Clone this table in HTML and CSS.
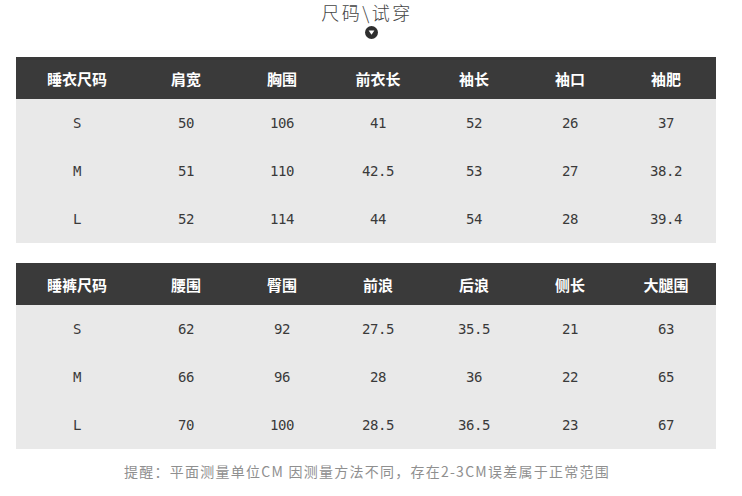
FILE: index.html
```html
<!DOCTYPE html>
<html lang="zh">
<head>
<meta charset="utf-8">
<link rel="stylesheet" href="styles.css">
</head>
<body>
<div class="page">
  <div class="title">尺码\试穿</div>
  <div class="arrow">
    <svg width="13" height="13" viewBox="0 0 13 13"><circle cx="6.5" cy="6.5" r="6.5" fill="#2e2e2e"/><path d="M3.6 4.6 H9.4 L6.5 8.8 Z" fill="#fff"/></svg>
  </div>

  <div class="table">
    <div class="row head">
      <div>睡衣尺码</div><div>肩宽</div><div>胸围</div><div>前衣长</div><div>袖长</div><div>袖口</div><div>袖肥</div>
    </div>
    <div class="row">
      <div>S</div><div>50</div><div>106</div><div>41</div><div>52</div><div>26</div><div>37</div>
    </div>
    <div class="row">
      <div>M</div><div>51</div><div>110</div><div>42.5</div><div>53</div><div>27</div><div>38.2</div>
    </div>
    <div class="row">
      <div>L</div><div>52</div><div>114</div><div>44</div><div>54</div><div>28</div><div>39.4</div>
    </div>
  </div>

  <div class="table second">
    <div class="row head">
      <div>睡裤尺码</div><div>腰围</div><div>臀围</div><div>前浪</div><div>后浪</div><div>侧长</div><div>大腿围</div>
    </div>
    <div class="row">
      <div>S</div><div>62</div><div>92</div><div>27.5</div><div>35.5</div><div>21</div><div>63</div>
    </div>
    <div class="row">
      <div>M</div><div>66</div><div>96</div><div>28</div><div>36</div><div>22</div><div>65</div>
    </div>
    <div class="row">
      <div>L</div><div>70</div><div>100</div><div>28.5</div><div>36.5</div><div>23</div><div>67</div>
    </div>
  </div>

  <div class="note">提醒：平面测量单位CM 因测量方法不同，存在2-3CM误差属于正常范围</div>
</div>
</body>
</html>
```

FILE: styles.css
```css
html, body {
  margin: 0;
  padding: 0;
  background: #fff;
}
body {
  font-family: "Noto Sans CJK SC", "DejaVu Sans", sans-serif;
  color: #333;
}
.page {
  width: 742px;
  height: 496px;
  overflow: hidden;
  display: flex;
  flex-direction: column;
  align-items: stretch;
}
.title {
  text-align: center;
  font-size: 18px;
  line-height: 24px;
  letter-spacing: 2.5px;
  color: #444;
  margin-left: -8px;
  font-weight: 300;
}
.arrow {
  display: flex;
  justify-content: center;
  height: 13px;
  margin-top: 2px;
  margin-left: 1px;
}
.arrow svg { display: block; }
.table {
  margin: 18px 0 0 16px;
  width: 700px;
  background: #e9e9e9;
}
.table.second {
  margin-top: 20px;
}
.row {
  display: grid;
  grid-template-columns: 122px repeat(6, 96px) 2px;
  height: 48px;
  align-items: center;
}
.row > div {
  text-align: center;
  font-family: "DejaVu Sans Mono", "Noto Sans CJK SC", monospace;
  font-size: 14px;
  letter-spacing: -0.4px;
  color: #3a3a3a;
}
.row.head {
  height: 42px;
  background: #3a3a3a;
}
.row.head > div {
  font-family: "Noto Sans CJK SC", sans-serif;
  font-size: 15px;
  font-weight: 700;
  letter-spacing: 0;
  color: #fff;
}
.note {
  margin-top: 12px;
  text-align: center;
  font-size: 14px;
  letter-spacing: 1.25px;
  color: #8f8f8f;
  margin-left: -8px;
}
```
